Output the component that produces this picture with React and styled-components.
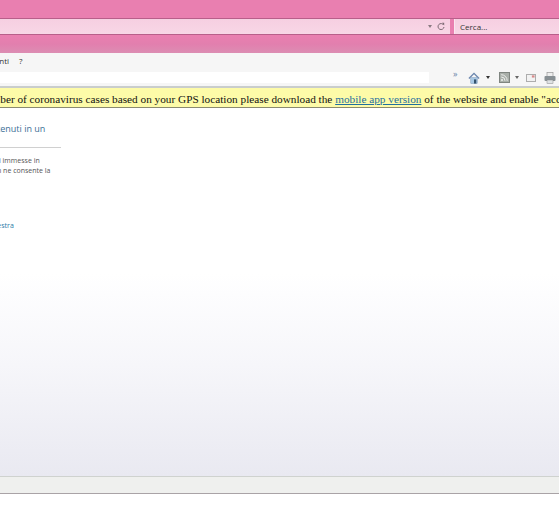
import React from 'react'
import styled, { createGlobalStyle } from 'styled-components'

const GlobalStyle = createGlobalStyle`
  html, body {
    margin: 0;
    padding: 0;
    background: #fff;
  }
`;

const Page = styled.div`
  width: 559px;
  height: 520px;
  overflow: hidden;
  display: flex;
  flex-direction: column;
  font-family: "Open Sans", "Liberation Sans", sans-serif;
`;

const Chrome = styled.div`
  height: 53px;
  flex: none;
  background: linear-gradient(#e97fb0 0, #e97fb0 36px, #e27fae 44px, #dc8db3 53px);
  display: flex;
  flex-direction: column;
`;

const AddressRow = styled.div`
  margin-top: 18px;
  height: 17px;
  display: flex;
  gap: 4px;
  border-top: 1px solid #b85f8a;
  border-bottom: 1px solid #b85f8a;
  background: #e97fb0;
  box-sizing: border-box;
`;

const Field = styled.div`
  background: linear-gradient(#f6cfe1, #f8d6e6);
  display: flex;
  align-items: center;
  justify-content: flex-end;
  font-size: 8px;
  color: #333;
  box-sizing: border-box;
  ${(p) => (p.$grow ? 'flex: 1; padding-right: 5px; gap: 5px;' : 'width: 105px; padding-left: 5px; justify-content: flex-start; border-left: 1px solid #fbe6ef;')}
`;

const Arrow = styled.span`
  width: 0;
  height: 0;
  border-left: 2.5px solid transparent;
  border-right: 2.5px solid transparent;
  border-top: 3px solid ${(p) => p.$color || '#8a7a82'};
`;

const MenuBar = styled.div`
  height: 19px;
  flex: none;
  box-sizing: border-box;
  padding-bottom: 5px;
  background: #f6f6f6;
  display: flex;
  align-items: center;
  gap: 10px;
  margin-left: -28px;
  font-size: 8px;
  color: #333;
`;

const ToolBar = styled.div`
  height: 14px;
  flex: none;
  background: #f6f6f6;
  display: flex;
  align-items: flex-start;
  border-bottom: 2px solid #c9cdcc;
`;

const UrlStrip = styled.div`
  width: 429px;
  height: 11px;
  background: #fff;
  flex: none;
`;

const Tools = styled.div`
  flex: 1;
  height: 11px;
  display: flex;
  align-items: center;
  padding-left: 24px;
  color: #8899aa;
`;

const Chevron = styled.span`
  font-size: 9px;
  line-height: 8px;
  margin-top: -8px;
  margin-right: 11px;
  color: #6a83a8;
`;

const Notice = styled.div`
  height: 19px;
  flex: none;
  box-sizing: border-box;
  height: 20px;
  background: #fdfba8;
  border-bottom: 1px solid #8a8a70;
  display: flex;
  align-items: center;
  padding-top: 2px;
  white-space: nowrap;
  font-family: "Liberation Serif", serif;
  font-size: 11.25px;
  color: #111;
  text-indent: -68px;
`;

const NoticeLink = styled.a`
  color: #1f6f9f;
  text-decoration: underline;
`;

const Content = styled.div`
  flex: 1;
  background: linear-gradient(#fff 0, #fff 45%, #f6f6fa 70%, #e9e9f1 100%);
  padding-top: 15px;
  font-size: 7px;
  color: #555;
  line-height: 10px;
  overflow: hidden;
`;

const Heading = styled.div`
  font-size: 9px;
  line-height: 12px;
  color: #3c6f96;
  margin-left: -61px;
  white-space: nowrap;
`;

const Rule = styled.div`
  width: 61px;
  height: 1px;
  background: #d0d0d0;
  margin-top: 12px;
  margin-bottom: 8px;
`;

const Para = styled.div`
  margin-left: ${(p) => p.$left || 0}px;
  white-space: nowrap;
`;

const LinkText = styled.div`
  margin-top: 45px;
  margin-left: -7px;
  color: #2a7aa8;
  white-space: nowrap;
`;

const StatusBar = styled.div`
  height: 16px;
  flex: none;
  background: #eff0ee;
  border-top: 1px solid #cfd2cf;
  border-bottom: 1px solid #a9a3a6;
`;

const Bottom = styled.div`
  height: 26px;
  flex: none;
  background: #fff;
`;

const ToolIcon = styled.svg`
  flex: none;
  display: block;
  margin-left: ${(p) => p.$before || 0}px;
  margin-right: ${(p) => p.$gap || 0}px;
`;

export default function App() {
  return (
    <Page>
      <GlobalStyle />
      <Chrome>
        <AddressRow>
          <Field $grow>
            <Arrow />
            <svg width="8" height="9" viewBox="0 0 8 9">
              <path d="M6.6 3 A3 3 0 1 0 7 5" fill="none" stroke="#7d6a74" strokeWidth="1" />
              <path d="M5 0.8 L7.2 0.8 L7.2 3.4 Z" fill="#7d6a74" />
            </svg>
          </Field>
          <Field>Cerca...</Field>
        </AddressRow>
      </Chrome>
      <MenuBar>
        <span>Strumenti</span>
        <span>?</span>
      </MenuBar>
      <ToolBar>
        <UrlStrip />
        <Tools>
          <Chevron>»</Chevron>
          <ToolIcon width="12" height="12" viewBox="0 0 13 13" $gap={6}>
            <path d="M1 7 L6.5 1.5 L12 7" fill="none" stroke="#6b86ad" strokeWidth="1.5" />
            <rect x="3" y="6" width="7" height="6.5" fill="#a8c8e4" stroke="#7b98b8" strokeWidth="0.5" />
            <rect x="6.5" y="8" width="2.5" height="4.5" fill="#34536f" />
          </ToolIcon>
          <Arrow $color="#333" />
          <ToolIcon width="11" height="11" viewBox="0 0 11 11" $before={9} $gap={5}>
            <rect x="0.5" y="0.5" width="10" height="10" fill="#a9afa9" stroke="#7f8580" />
            <circle cx="3" cy="8" r="1" fill="#eef0ee" />
            <path d="M2.2 5 A3.8 3.8 0 0 1 6 8.8 M2.2 2.7 A6 6 0 0 1 8.2 8.8" fill="none" stroke="#eef0ee" strokeWidth="1" />
          </ToolIcon>
          <Arrow $color="#666" />
          <ToolIcon width="10" height="8" viewBox="0 0 11 9" $before={7} $gap={8}>
            <rect x="0.5" y="0.5" width="10" height="8" fill="#f2f2f2" stroke="#a5a5a5" />
            <rect x="6.5" y="1.5" width="3" height="2.5" fill="#d88a8a" />
          </ToolIcon>
          <ToolIcon width="12" height="12" viewBox="0 0 12 12">
            <rect x="3" y="0.5" width="6" height="4" fill="#eee" stroke="#999" strokeWidth="0.7" />
            <rect x="0.5" y="4" width="11" height="5" rx="1" fill="#889094" />
            <rect x="3" y="8" width="6" height="3.5" fill="#dfe3e5" stroke="#888" strokeWidth="0.5" />
          </ToolIcon>
        </Tools>
      </ToolBar>
      <Notice>
        <span>
          To see the number of coronavirus cases based on your GPS location please download the{' '}
          <NoticeLink href="#">mobile app version</NoticeLink> of the website and enable "access to location"
        </span>
      </Notice>
      <Content>
        <Heading>Visualizza contenuti in un</Heading>
        <Rule />
        <Para $left={-1}>i immesse in</Para>
        <Para $left={-3}>n ne consente la</Para>
        <LinkText>nestra</LinkText>
      </Content>
      <StatusBar />
      <Bottom />
    </Page>
  )
}
